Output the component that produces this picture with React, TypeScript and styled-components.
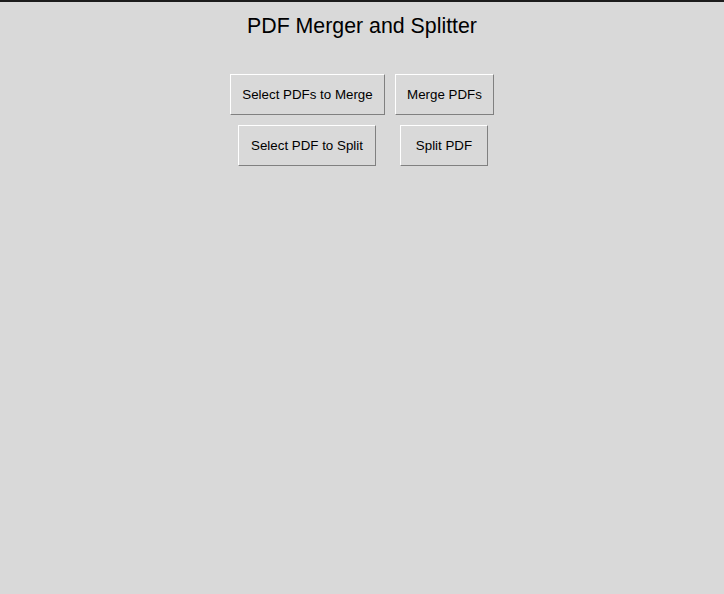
import React from "react";
import styled, { createGlobalStyle } from "styled-components";

const Global = createGlobalStyle`
  html, body { margin: 0; padding: 0; background: #d9d9d9; }
  body { font-family: "Liberation Sans", Arial, sans-serif; color: #000; }
`;

const Window = styled.div`
  min-height: 594px;
  box-sizing: border-box;
  border-top: 2px solid #1c1c1c;
  background: #d9d9d9;
  display: flex;
  flex-direction: column;
  align-items: center;
`;

const Title = styled.h1`
  margin: 12px 0 0;
  font-size: 21.33px;
  font-weight: normal;
  line-height: 25px;
  text-align: center;
`;

const ButtonGrid = styled.div`
  margin-top: 35px;
  display: grid;
  grid-template-columns: auto auto;
  justify-items: center;
  column-gap: 10px;
  row-gap: 10px;
`;

const Button = styled.button<{ $w: number; $floorCenter?: boolean }>`
  box-sizing: border-box;
  width: ${(p) => p.$w}px;
  height: 41px;
  margin-right: ${(p) => (p.$floorCenter ? 1 : 0)}px;
  padding: 0;
  font-family: "Liberation Sans", Arial, sans-serif;
  font-size: 13.33px;
  color: #000;
  background: #d9d9d9;
  border: 1px solid;
  border-color: #ffffff #808080 #808080 #ffffff;
  border-radius: 0;
  cursor: pointer;
  white-space: nowrap;
`;

export default function App() {
  return (
    <>
      <Global />
      <Window>
        <Title>PDF Merger and Splitter</Title>
        <ButtonGrid>
          <Button $w={155}>Select PDFs to Merge</Button>
          <Button $w={99}>Merge PDFs</Button>
          <Button $w={138} $floorCenter>Select PDF to Split</Button>
          <Button $w={88} $floorCenter>Split PDF</Button>
        </ButtonGrid>
      </Window>
    </>
  );
}
